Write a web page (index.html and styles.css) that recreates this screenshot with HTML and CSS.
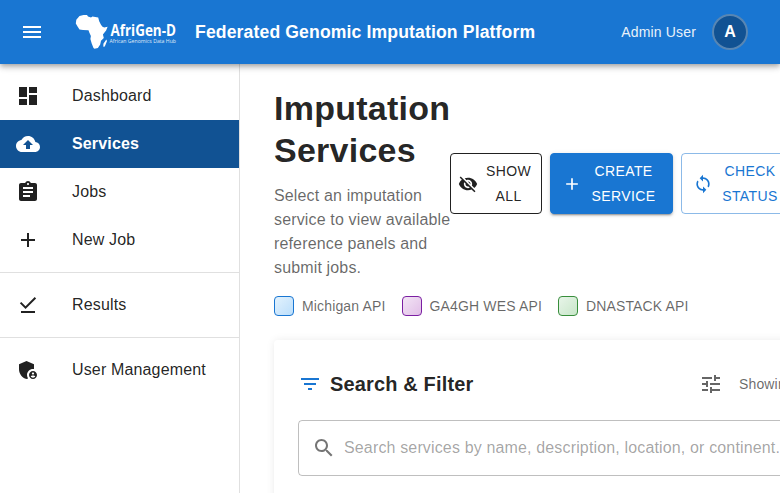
FILE: index.html
```html
<!DOCTYPE html>
<html lang="en">
<head>
<meta charset="utf-8">
<title>Federated Genomic Imputation Platform</title>
<link rel="stylesheet" href="styles.css">
</head>
<body>
<header class="appbar">
  <svg class="icon menu" viewBox="0 0 24 24"><path d="M3 18h18v-2H3zm0-5h18v-2H3zm0-7v2h18V6z"/></svg>
  <svg class="logo" viewBox="0 0 104 36">
    <path d="M.8 9.500L1.300 5.700 4.500 2 8.500.9 12 1l1 1.600 3 .9 1.400-.9 5.800.9 1 3.800 1.500 3 1.500 2.300 2 .8 3.400-.6-1.500 3.600-3.200 4.200.9 3.500-2.800 2.700-.8 3.800-2.300 3.400-3.400.7-1-.6-1.800-4.700-1.300-4.400.5-3-1.600-3.500-.8-2.300-5.500-.2-3.500-.5-1.800-2.700zM31.300 25.500l.7 1.400-2.200 5.700-1.500.2.100-3 1.400-2z"/>
    <text class="logo-name" x="35.500" y="22" textLength="65.500" lengthAdjust="spacingAndGlyphs">AfriGen-D</text>
    <text class="logo-tag" x="34.500" y="28.700" textLength="66.500" lengthAdjust="spacingAndGlyphs">African Genomics Data Hub</text>
  </svg>
  <h1 class="app-title">Federated Genomic Imputation Platform</h1>
  <span class="user">Admin User</span>
  <span class="avatar">A</span>
</header>
<div class="layout">
  <nav class="sidebar">
    <a class="item"><svg class="icon" viewBox="0 0 24 24"><path d="M3 13h8V3H3zm0 8h8v-6H3zm10 0h8V11h-8zm0-18v6h8V3z"/></svg><span>Dashboard</span></a>
    <a class="item active"><svg class="icon" viewBox="0 0 24 24"><path d="M19.350 10.040C18.670 6.590 15.640 4 12 4 9.110 4 6.600 5.640 5.350 8.040 2.340 8.360 0 10.910 0 14c0 3.310 2.690 6 6 6h13c2.760 0 5-2.240 5-5 0-2.640-2.050-4.780-4.650-4.960M14 13v4h-4v-4H7l5-5 5 5z"/></svg><span>Services</span></a>
    <a class="item"><svg class="icon" viewBox="0 0 24 24"><path d="M19 3h-4.180C14.400 1.840 13.300 1 12 1s-2.400.84-2.820 2H5c-1.100 0-2 .9-2 2v14c0 1.100.9 2 2 2h14c1.100 0 2-.9 2-2V5c0-1.100-.9-2-2-2m-7 0c.55 0 1 .45 1 1s-.45 1-1 1-1-.45-1-1 .45-1 1-1m2 14H7v-2h7zm3-4H7v-2h10zm0-4H7V7h10z"/></svg><span>Jobs</span></a>
    <a class="item"><svg class="icon" viewBox="0 0 24 24"><path d="M19 13h-6v6h-2v-6H5v-2h6V5h2v6h6z"/></svg><span>New Job</span></a>
    <hr>
    <a class="item"><svg class="icon" viewBox="0 0 24 24"><path d="M20.130 5.410 18.720 4l-9.190 9.190-4.250-4.240-1.410 1.410 5.660 5.660zM5 18h14v2H5z"/></svg><span>Results</span></a>
    <hr>
    <a class="item"><svg class="icon" viewBox="0 0 24 24"><path d="M17 11c.34 0 .67.040 1 .090V6.270L10.500 3 3 6.270v4.910c0 4.540 3.200 8.790 7.500 9.820.55-.13 1.080-.32 1.600-.55-.69-.98-1.100-2.170-1.100-3.450 0-3.310 2.690-6 6-6"/><path fill-rule="evenodd" d="M17 13c-2.210 0-4 1.790-4 4s1.790 4 4 4 4-1.790 4-4-1.790-4-4-4m0 1.380c.62 0 1.120.51 1.120 1.120s-.51 1.120-1.120 1.120-1.120-.51-1.120-1.120.5-1.120 1.120-1.120m0 5.370c-.93 0-1.740-.46-2.240-1.170.05-.72 1.510-1.080 2.240-1.080s2.190.36 2.240 1.080c-.5.71-1.310 1.170-2.240 1.170"/></svg><span>User Management</span></a>
  </nav>
  <main class="content">
    <div class="page-head">
      <div class="intro">
        <h2>Imputation Services</h2>
        <p>Select an imputation service to view available reference panels and submit jobs.</p>
      </div>
      <div class="actions">
        <button class="btn show"><svg viewBox="0 0 24 24"><path d="M12 7c2.760 0 5 2.240 5 5 0 .65-.13 1.260-.36 1.830l2.920 2.920c1.510-1.260 2.700-2.890 3.430-4.750-1.730-4.390-6-7.500-11-7.500-1.400 0-2.740.25-3.980.7l2.160 2.160C10.740 7.130 11.350 7 12 7M2 4.270l2.280 2.280.46.46C3.080 8.300 1.780 10.020 1 12c1.730 4.390 6 7.500 11 7.500 1.550 0 3.030-.3 4.380-.84l.42.42L19.730 22 21 20.730 3.270 3zM7.530 9.800l1.550 1.550c-.05.21-.08.43-.08.65 0 1.660 1.340 3 3 3 .22 0 .44-.03.65-.08l1.550 1.550c-.67.33-1.410.53-2.200.53-2.760 0-5-2.240-5-5 0-.79.2-1.530.53-2.200m4.310-.78 3.150 3.150.02-.16c0-1.660-1.340-3-3-3z"/></svg><span>Show All</span></button>
        <button class="btn create"><svg viewBox="0 0 24 24"><path d="M19 13h-6v6h-2v-6H5v-2h6V5h2v6h6z"/></svg><span>Create Service</span></button>
        <button class="btn check"><svg viewBox="0 0 24 24"><path d="M12 4V1L8 5l4 4V6c3.310 0 6 2.690 6 6 0 1.010-.25 1.970-.7 2.800l1.460 1.460C19.540 15.030 20 13.570 20 12c0-4.420-3.580-8-8-8m0 14c-3.310 0-6-2.690-6-6 0-1.010.25-1.970.7-2.800L5.240 7.740C4.460 8.970 4 10.430 4 12c0 4.420 3.580 8 8 8v3l4-4-4-4z"/></svg><span>Check Status</span></button>
      </div>
    </div>
    <div class="legend">
      <div class="key"><i class="swatch blue"></i>Michigan API</div>
      <div class="key"><i class="swatch purple"></i>GA4GH WES API</div>
      <div class="key"><i class="swatch green"></i>DNASTACK API</div>
    </div>
    <section class="card">
      <div class="card-head">
        <svg class="icon filter" viewBox="0 0 24 24"><path d="M10 18h4v-2h-4zM3 6v2h18V6zm3 7h12v-2H6z"/></svg>
        <h3>Search &amp; Filter</h3>
        <svg class="icon tune" viewBox="0 0 24 24"><path d="M3 17v2h6v-2zM3 5v2h10V5zm10 16v-2h8v-2h-8v-2h-2v6zM7 9v2H3v2h4v2h2V9zm14 4v-2H11v2zm-6-4h2V7h4V5h-4V3h-2z"/></svg>
        <span class="count">Showing 5 of 5 services</span>
      </div>
      <label class="search">
        <svg class="icon" viewBox="0 0 24 24"><path d="M15.500 14h-.79l-.28-.27C15.410 12.590 16 11.110 16 9.500 16 5.910 13.090 3 9.500 3S3 5.910 3 9.500 5.910 16 9.500 16c1.610 0 3.090-.59 4.230-1.570l.27.28v.79l5 4.990L20.490 19zm-6 0C7.010 14 5 11.990 5 9.500S7.010 5 9.500 5 14 7.010 14 9.500 11.990 14 9.500 14"/></svg>
        <span>Search services by name, description, location, or continent...</span>
      </label>
    </section>
  </main>
</div>
</body>
</html>
```
FILE: styles.css
```css
* { box-sizing: border-box; }
html, body { height: 100%; overflow: hidden; }
body {
  margin: 0;
  display: flex;
  flex-direction: column;
  background: #fff;
  color: rgba(0, 0, 0, 0.87);
  font: 16px/1.5 "Liberation Sans", Arial, sans-serif;
  letter-spacing: 0.00938em;
}
svg { fill: currentColor; flex: none; display: block; }
.icon { width: 24px; height: 24px; }

.appbar {
  position: relative;
  z-index: 2;
  flex: none;
  display: flex;
  align-items: center;
  height: 64px;
  padding: 0 32px 0 20px;
  background: #1976d2;
  color: #fff;
  box-shadow: 0 2px 4px -1px rgba(0,0,0,.2), 0 4px 5px rgba(0,0,0,.14), 0 1px 10px rgba(0,0,0,.12);
}
.logo { width: 104px; height: 36px; margin-left: 31px; letter-spacing: 0; }
.logo-name { font: 700 16.500px "Open Sans", sans-serif; }
.logo-tag { font: 5.500px "Open Sans", sans-serif; opacity: .85; }
.app-title { margin: 0 auto 0 16px; font-size: 17.6px; font-weight: 700; letter-spacing: 0.0075em; white-space: nowrap; }
.user { font-size: 14px; letter-spacing: 0.01071em; opacity: .9; }
.avatar {
  display: grid;
  place-items: center;
  width: 36px;
  height: 36px;
  margin-left: 16px;
  border: 2px solid rgba(255,255,255,.3);
  border-radius: 50%;
  background: #115293;
  font-size: 16px;
  font-weight: 700;
  letter-spacing: 0;
}

.layout { display: flex; flex: 1; min-height: 0; }
.sidebar { flex: none; width: 240px; padding-top: 8px; border-right: 1px solid #e0e0e0; }
.item { display: flex; align-items: center; height: 48px; padding-left: 16px; }
.item .icon { margin-right: 32px; }
.active { background: #115293; color: #fff; font-weight: 700; }
.sidebar hr { height: 1px; margin: 8px 0; border: 0; background: #e0e0e0; }

.content { flex: none; width: 640px; padding: 24px 34px; }
.page-head { display: flex; align-items: center; height: 192px; }
.intro { width: 176px; flex: none; }
h2 { margin: 0 0 12px; font-size: 34px; line-height: 1.235; letter-spacing: 0.00735em; }
.intro p { margin: 0; color: rgba(0,0,0,.6); width: 180px; }
.actions { display: flex; gap: 8px; margin-top: -1px; }
.btn {
  display: flex;
  align-items: center;
  gap: 8px;
  flex: none;
  height: 61px;
  padding: 5px 15px 5px 11px;
  border: 1px solid;
  border-radius: 4px;
  background: transparent;
  font: 14px/24.5px "Liberation Sans", Arial, sans-serif;
  letter-spacing: 0.02857em;
  text-transform: uppercase;
  text-align: center;
}
.btn svg { width: 20px; height: 20px; }
.btn span { flex: 1; }
.show { width: 92px; padding: 5px 10px 5px 7px; color: rgba(0,0,0,.87); }
.create {
  width: 123px;
  border-color: #1976d2;
  background: #1976d2;
  color: #fff;
  box-shadow: 0 3px 1px -2px rgba(0,0,0,.2), 0 2px 2px rgba(0,0,0,.14), 0 1px 5px rgba(0,0,0,.12);
}
.check { width: 114px; border-color: rgba(25,118,210,.5); color: #1976d2; }

.legend { display: flex; gap: 16px; margin-top: 16px; }
.key { display: flex; align-items: center; gap: 8px; height: 20px; color: rgba(0,0,0,.6); font-size: 14px; letter-spacing: 0.01071em; white-space: nowrap; }
.swatch { width: 20px; height: 20px; border: 1px solid; border-radius: 4px; }
.blue { border-color: #1976d2; background: linear-gradient(135deg, #e3f2fd, #bbdefb); }
.purple { border-color: #7b1fa2; background: linear-gradient(135deg, #f3e5f5, #e1bee7); }
.green { border-color: #388e3c; background: linear-gradient(135deg, #e8f5e9, #c8e6c9); }

.card { width: 700px; height: 260px; margin-top: 24px; padding: 24px; border-radius: 4px; box-shadow: 0 2px 1px -1px rgba(0,0,0,.04), 0 1px 1px rgba(0,0,0,.04), 0 0 8px rgba(0,0,0,.08); }
.card-head { display: flex; align-items: center; height: 40px; }
.filter { color: #1976d2; }
h3 { margin: 0 0 0 8px; width: 369px; font-size: 20px; line-height: 32px; letter-spacing: 0.0075em; }
.tune, .count { color: rgba(0,0,0,.6); }
.count { margin-left: 16px; font-size: 14px; letter-spacing: 0.01071em; white-space: nowrap; }
.search { display: flex; align-items: center; gap: 8px; height: 56px; margin-top: 16px; padding-left: 13px; border: 1px solid rgba(0,0,0,.25); border-radius: 4px; color: rgba(0,0,0,.54); white-space: nowrap; }
.search span { color: rgba(0,0,0,.37); }
```
